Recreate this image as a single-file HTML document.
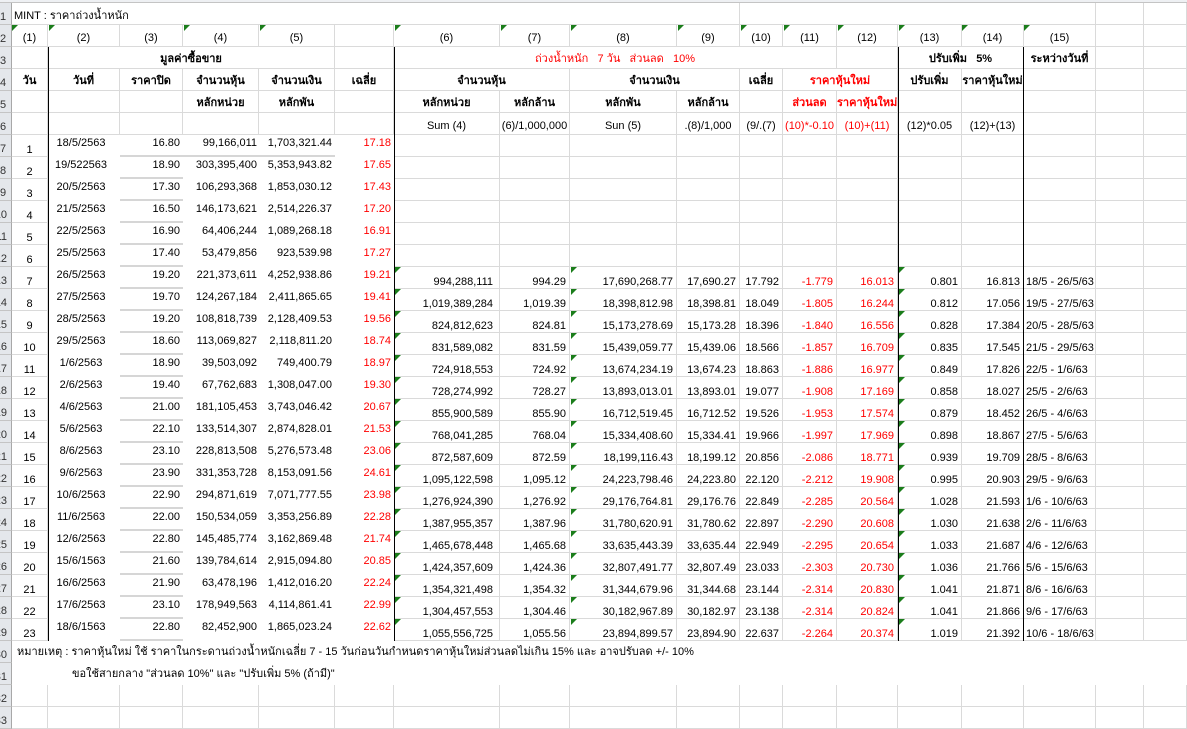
<!DOCTYPE html>
<html><head><meta charset="utf-8">
<style>
*{margin:0;padding:0;box-sizing:border-box}
body{width:1187px;height:714px;overflow:hidden;background:#fff;font-family:"Liberation Sans","DejaVu Sans",sans-serif;font-size:11px;color:#000;position:relative}
.row{display:grid;grid-template-columns:12px 36px 72px 63px 76px 76px 59px 106px 70px 107px 63px 43px 54px 61px 64px 62px 72px 48px 43px;height:22px}
.row>div{border-right:1px solid #dadada;border-bottom:1px solid #dadada;white-space:nowrap;overflow:hidden;text-align:center;line-height:14px}
.row>div:first-child{background:#e4e7eb;border-right:1px solid #a8a8a8;border-bottom:1px solid #c4c4c4;direction:rtl;text-align:left;padding:7px 4px 0 0;color:#333;font-size:11px;font-weight:normal}
.hd>div{padding-top:5px;font-weight:bold}
.red{color:#f00}
.r>div{text-align:right;padding:8px 3px 0 0}
.r>div:nth-child(2){text-align:center;padding-right:0}
.r>div:nth-child(3){text-align:center;padding:1px 6px 0 0;border:none}
.r>div:nth-child(4){padding-top:1px;border-right:none;border-bottom:2px solid #d6d6d6}
.r>div:nth-child(5),.r>div:nth-child(6),.r>div:nth-child(7){padding-top:1px;border:none}
.r>div:nth-child(5){padding-right:2px}
.r>div:nth-child(7),.r>div:nth-child(13),.r>div:nth-child(14){color:#f00}
.r>div:nth-child(8){padding-right:6px}
.r>div:nth-child(17){text-align:left;padding-left:2px}
.bl{position:absolute;width:1px;background:#000}
.t{position:absolute;width:0;height:0;border-top:6px solid #1b7d1b;border-right:6px solid transparent}
.blank>div{border:none!important}
.blank>div:first-child{border-right:1px solid #a8a8a8!important;border-bottom:1px solid #c4c4c4!important}
</style></head><body>
<div style="height:3px;background:#eef0f3;border-bottom:1px solid #c4c4c4"></div>

<div class="row" style="height:22px"><div>1</div><div style="grid-column:span 9;border-right:none;text-align:left;padding:6px 0 0 2px">MINT : ราคาถ่วงน้ำหนัก</div><div></div><div style="grid-column:span 5;border-right:none"></div><div></div><div></div><div></div></div>

<div class="row"><div>2</div><div style="padding-top:6px">(1)</div><div style="padding-top:6px">(2)</div><div style="padding-top:6px">(3)</div><div style="padding-top:6px">(4)</div><div style="padding-top:6px">(5)</div><div></div><div style="padding-top:6px">(6)</div><div style="padding-top:6px">(7)</div><div style="padding-top:6px">(8)</div><div style="padding-top:6px">(9)</div><div style="padding-top:6px">(10)</div><div style="padding-top:6px">(11)</div><div style="padding-top:6px">(12)</div><div style="padding-top:6px">(13)</div><div style="padding-top:6px">(14)</div><div style="padding-top:6px">(15)</div><div></div><div></div></div>

<div class="row hd"><div>3</div><div></div><div style="grid-column:span 4">มูลค่าซื้อขาย</div><div></div><div style="grid-column:span 6;color:#f00;font-weight:normal">ถ่วงน้ำหนัก&nbsp;&nbsp; 7 วัน&nbsp;&nbsp; ส่วนลด&nbsp;&nbsp; 10%</div><div></div><div style="grid-column:span 2">ปรับเพิ่ม&nbsp;&nbsp; 5%</div><div>ระหว่างวันที่</div><div></div><div></div></div>

<div class="row hd"><div>4</div><div>วัน</div><div>วันที่</div><div>ราคาปิด</div><div>จำนวนหุ้น</div><div>จำนวนเงิน</div><div>เฉลี่ย</div><div style="grid-column:span 2">จำนวนหุ้น</div><div style="grid-column:span 2">จำนวนเงิน</div><div>เฉลี่ย</div><div style="grid-column:span 2;color:#f00">ราคาหุ้นใหม่</div><div>ปรับเพิ่ม</div><div>ราคาหุ้นใหม่</div><div></div><div></div><div></div></div>

<div class="row hd"><div>5</div><div></div><div></div><div></div><div>หลักหน่วย</div><div>หลักพัน</div><div></div><div>หลักหน่วย</div><div>หลักล้าน</div><div>หลักพัน</div><div>หลักล้าน</div><div></div><div class="red">ส่วนลด</div><div class="red">ราคาหุ้นใหม่</div><div></div><div></div><div></div><div></div><div></div></div>

<div class="row"><div>6</div><div></div><div></div><div></div><div></div><div></div><div></div><div style="padding-top:6px">Sum (4)</div><div style="padding-top:6px">(6)/1,000,000</div><div style="padding-top:6px">Sun (5)</div><div style="padding-top:6px">.(8)/1,000</div><div style="padding-top:6px">(9/.(7)</div><div style="padding-top:6px" class="red">(10)*-0.10</div><div style="padding-top:6px" class="red">(10)+(11)</div><div style="padding-top:6px">(12)*0.05</div><div style="padding-top:6px">(12)+(13)</div><div></div><div></div><div></div></div>

<div class="row r"><div>7</div><div>1</div><div>18/5/2563</div><div>16.80</div><div style="border-bottom:2px solid #d6d6d6">99,166,011</div><div style="border-bottom:2px solid #d6d6d6">1,703,321.44</div><div>17.18</div><div></div><div></div><div></div><div></div><div></div><div></div><div></div><div></div><div></div><div></div><div></div><div></div></div>
<div class="row r"><div>8</div><div>2</div><div>19/522563</div><div>18.90</div><div>303,395,400</div><div>5,353,943.82</div><div>17.65</div><div></div><div></div><div></div><div></div><div></div><div></div><div></div><div></div><div></div><div></div><div></div><div></div></div>
<div class="row r"><div>9</div><div>3</div><div>20/5/2563</div><div>17.30</div><div>106,293,368</div><div>1,853,030.12</div><div>17.43</div><div></div><div></div><div></div><div></div><div></div><div></div><div></div><div></div><div></div><div></div><div></div><div></div></div>
<div class="row r"><div>10</div><div>4</div><div>21/5/2563</div><div>16.50</div><div>146,173,621</div><div>2,514,226.37</div><div>17.20</div><div></div><div></div><div></div><div></div><div></div><div></div><div></div><div></div><div></div><div></div><div></div><div></div></div>
<div class="row r"><div>11</div><div>5</div><div>22/5/2563</div><div>16.90</div><div>64,406,244</div><div>1,089,268.18</div><div>16.91</div><div></div><div></div><div></div><div></div><div></div><div></div><div></div><div></div><div></div><div></div><div></div><div></div></div>
<div class="row r"><div>12</div><div>6</div><div>25/5/2563</div><div>17.40</div><div>53,479,856</div><div>923,539.98</div><div>17.27</div><div></div><div></div><div></div><div></div><div></div><div></div><div></div><div></div><div></div><div></div><div></div><div></div></div>
<div class="row r"><div>13</div><div>7</div><div>26/5/2563</div><div>19.20</div><div>221,373,611</div><div>4,252,938.86</div><div>19.21</div><div>994,288,111</div><div>994.29</div><div>17,690,268.77</div><div>17,690.27</div><div>17.792</div><div>-1.779</div><div>16.013</div><div>0.801</div><div>16.813</div><div>18/5 - 26/5/63</div><div></div><div></div></div>
<div class="row r"><div>14</div><div>8</div><div>27/5/2563</div><div>19.70</div><div>124,267,184</div><div>2,411,865.65</div><div>19.41</div><div>1,019,389,284</div><div>1,019.39</div><div>18,398,812.98</div><div>18,398.81</div><div>18.049</div><div>-1.805</div><div>16.244</div><div>0.812</div><div>17.056</div><div>19/5 - 27/5/63</div><div></div><div></div></div>
<div class="row r"><div>15</div><div>9</div><div>28/5/2563</div><div>19.20</div><div>108,818,739</div><div>2,128,409.53</div><div>19.56</div><div>824,812,623</div><div>824.81</div><div>15,173,278.69</div><div>15,173.28</div><div>18.396</div><div>-1.840</div><div>16.556</div><div>0.828</div><div>17.384</div><div>20/5 - 28/5/63</div><div></div><div></div></div>
<div class="row r"><div>16</div><div>10</div><div>29/5/2563</div><div>18.60</div><div>113,069,827</div><div>2,118,811.20</div><div>18.74</div><div>831,589,082</div><div>831.59</div><div>15,439,059.77</div><div>15,439.06</div><div>18.566</div><div>-1.857</div><div>16.709</div><div>0.835</div><div>17.545</div><div>21/5 - 29/5/63</div><div></div><div></div></div>
<div class="row r"><div>17</div><div>11</div><div>1/6/2563</div><div>18.90</div><div>39,503,092</div><div>749,400.79</div><div>18.97</div><div>724,918,553</div><div>724.92</div><div>13,674,234.19</div><div>13,674.23</div><div>18.863</div><div>-1.886</div><div>16.977</div><div>0.849</div><div>17.826</div><div>22/5 - 1/6/63</div><div></div><div></div></div>
<div class="row r"><div>18</div><div>12</div><div>2/6/2563</div><div>19.40</div><div>67,762,683</div><div>1,308,047.00</div><div>19.30</div><div>728,274,992</div><div>728.27</div><div>13,893,013.01</div><div>13,893.01</div><div>19.077</div><div>-1.908</div><div>17.169</div><div>0.858</div><div>18.027</div><div>25/5 - 2/6/63</div><div></div><div></div></div>
<div class="row r"><div>19</div><div>13</div><div>4/6/2563</div><div>21.00</div><div>181,105,453</div><div>3,743,046.42</div><div>20.67</div><div>855,900,589</div><div>855.90</div><div>16,712,519.45</div><div>16,712.52</div><div>19.526</div><div>-1.953</div><div>17.574</div><div>0.879</div><div>18.452</div><div>26/5 - 4/6/63</div><div></div><div></div></div>
<div class="row r"><div>20</div><div>14</div><div>5/6/2563</div><div>22.10</div><div>133,514,307</div><div>2,874,828.01</div><div>21.53</div><div>768,041,285</div><div>768.04</div><div>15,334,408.60</div><div>15,334.41</div><div>19.966</div><div>-1.997</div><div>17.969</div><div>0.898</div><div>18.867</div><div>27/5 - 5/6/63</div><div></div><div></div></div>
<div class="row r"><div>21</div><div>15</div><div>8/6/2563</div><div>23.10</div><div>228,813,508</div><div>5,276,573.48</div><div>23.06</div><div>872,587,609</div><div>872.59</div><div>18,199,116.43</div><div>18,199.12</div><div>20.856</div><div>-2.086</div><div>18.771</div><div>0.939</div><div>19.709</div><div>28/5 - 8/6/63</div><div></div><div></div></div>
<div class="row r"><div>22</div><div>16</div><div>9/6/2563</div><div>23.90</div><div>331,353,728</div><div>8,153,091.56</div><div>24.61</div><div>1,095,122,598</div><div>1,095.12</div><div>24,223,798.46</div><div>24,223.80</div><div>22.120</div><div>-2.212</div><div>19.908</div><div>0.995</div><div>20.903</div><div>29/5 - 9/6/63</div><div></div><div></div></div>
<div class="row r"><div>23</div><div>17</div><div>10/6/2563</div><div>22.90</div><div>294,871,619</div><div>7,071,777.55</div><div>23.98</div><div>1,276,924,390</div><div>1,276.92</div><div>29,176,764.81</div><div>29,176.76</div><div>22.849</div><div>-2.285</div><div>20.564</div><div>1.028</div><div>21.593</div><div>1/6 - 10/6/63</div><div></div><div></div></div>
<div class="row r"><div>24</div><div>18</div><div>11/6/2563</div><div>22.00</div><div>150,534,059</div><div>3,353,256.89</div><div>22.28</div><div>1,387,955,357</div><div>1,387.96</div><div>31,780,620.91</div><div>31,780.62</div><div>22.897</div><div>-2.290</div><div>20.608</div><div>1.030</div><div>21.638</div><div>2/6 - 11/6/63</div><div></div><div></div></div>
<div class="row r"><div>25</div><div>19</div><div>12/6/2563</div><div>22.80</div><div>145,485,774</div><div>3,162,869.48</div><div>21.74</div><div>1,465,678,448</div><div>1,465.68</div><div>33,635,443.39</div><div>33,635.44</div><div>22.949</div><div>-2.295</div><div>20.654</div><div>1.033</div><div>21.687</div><div>4/6 - 12/6/63</div><div></div><div></div></div>
<div class="row r"><div>26</div><div>20</div><div>15/6/1563</div><div>21.60</div><div>139,784,614</div><div>2,915,094.80</div><div>20.85</div><div>1,424,357,609</div><div>1,424.36</div><div>32,807,491.77</div><div>32,807.49</div><div>23.033</div><div>-2.303</div><div>20.730</div><div>1.036</div><div>21.766</div><div>5/6 - 15/6/63</div><div></div><div></div></div>
<div class="row r"><div>27</div><div>21</div><div>16/6/2563</div><div>21.90</div><div>63,478,196</div><div>1,412,016.20</div><div>22.24</div><div>1,354,321,498</div><div>1,354.32</div><div>31,344,679.96</div><div>31,344.68</div><div>23.144</div><div>-2.314</div><div>20.830</div><div>1.041</div><div>21.871</div><div>8/6 - 16/6/63</div><div></div><div></div></div>
<div class="row r"><div>28</div><div>22</div><div>17/6/2563</div><div>23.10</div><div>178,949,563</div><div>4,114,861.41</div><div>22.99</div><div>1,304,457,553</div><div>1,304.46</div><div>30,182,967.89</div><div>30,182.97</div><div>23.138</div><div>-2.314</div><div>20.824</div><div>1.041</div><div>21.866</div><div>9/6 - 17/6/63</div><div></div><div></div></div>
<div class="row r"><div>29</div><div>23</div><div>18/6/1563</div><div>22.80</div><div>82,452,900</div><div>1,865,023.24</div><div>22.62</div><div>1,055,556,725</div><div>1,055.56</div><div>23,894,899.57</div><div>23,894.90</div><div>22.637</div><div>-2.264</div><div>20.374</div><div>1.019</div><div>21.392</div><div>10/6 - 18/6/63</div><div></div><div></div></div>

<div class="row blank"><div>30</div><div style="grid-column:span 16;text-align:left;padding:4px 0 0 5px">หมายเหตุ : ราคาหุ้นใหม่ ใช้ ราคาในกระดานถ่วงน้ำหนักเฉลี่ย 7 - 15 วันก่อนวันกำหนดราคาหุ้นใหม่ส่วนลดไม่เกิน 15% และ อาจปรับลด +/- 10%</div><div></div><div></div></div>
<div class="row blank"><div>31</div><div style="grid-column:span 16;text-align:left;padding:4px 0 0 60px">ขอใช้สายกลาง "ส่วนลด 10%" และ "ปรับเพิ่ม 5% (ถ้ามี)"</div><div></div><div></div></div>
<div class="row"><div>32</div><div></div><div></div><div></div><div></div><div></div><div></div><div></div><div></div><div></div><div></div><div></div><div></div><div></div><div></div><div></div><div></div><div></div><div></div></div>
<div class="row"><div>33</div><div></div><div></div><div></div><div></div><div></div><div></div><div></div><div></div><div></div><div></div><div></div><div></div><div></div><div></div><div></div><div></div><div></div><div></div></div>

<div class="bl" style="left:48px;top:47px;height:594px"></div>
<div class="bl" style="left:394px;top:47px;height:594px"></div>
<div class="bl" style="left:898px;top:47px;height:594px"></div>
<div class="bl" style="left:1023px;top:47px;height:594px"></div>

<div class="t" style="left:12px;top:25px"></div><div class="t" style="left:49px;top:25px"></div><div class="t" style="left:184px;top:25px"></div><div class="t" style="left:260px;top:25px"></div><div class="t" style="left:395px;top:25px"></div><div class="t" style="left:501px;top:25px"></div><div class="t" style="left:571px;top:25px"></div><div class="t" style="left:678px;top:25px"></div><div class="t" style="left:741px;top:25px"></div><div class="t" style="left:784px;top:25px"></div><div class="t" style="left:838px;top:25px"></div><div class="t" style="left:899px;top:25px"></div><div class="t" style="left:962px;top:25px"></div><div class="t" style="left:1024px;top:25px"></div>

<div class="t" style="left:395px;top:267px"></div><div class="t" style="left:571px;top:267px"></div><div class="t" style="left:899px;top:267px"></div>
<div class="t" style="left:395px;top:289px"></div><div class="t" style="left:571px;top:289px"></div><div class="t" style="left:899px;top:289px"></div>
<div class="t" style="left:395px;top:311px"></div><div class="t" style="left:571px;top:311px"></div><div class="t" style="left:899px;top:311px"></div>
<div class="t" style="left:395px;top:333px"></div><div class="t" style="left:571px;top:333px"></div><div class="t" style="left:899px;top:333px"></div>
<div class="t" style="left:395px;top:355px"></div><div class="t" style="left:571px;top:355px"></div><div class="t" style="left:899px;top:355px"></div>
<div class="t" style="left:395px;top:377px"></div><div class="t" style="left:571px;top:377px"></div><div class="t" style="left:899px;top:377px"></div>
<div class="t" style="left:395px;top:399px"></div><div class="t" style="left:571px;top:399px"></div><div class="t" style="left:899px;top:399px"></div>
<div class="t" style="left:395px;top:421px"></div><div class="t" style="left:571px;top:421px"></div><div class="t" style="left:899px;top:421px"></div>
<div class="t" style="left:395px;top:443px"></div><div class="t" style="left:571px;top:443px"></div><div class="t" style="left:899px;top:443px"></div>
<div class="t" style="left:395px;top:465px"></div><div class="t" style="left:571px;top:465px"></div><div class="t" style="left:899px;top:465px"></div>
<div class="t" style="left:395px;top:487px"></div><div class="t" style="left:571px;top:487px"></div><div class="t" style="left:899px;top:487px"></div>
<div class="t" style="left:395px;top:509px"></div><div class="t" style="left:571px;top:509px"></div><div class="t" style="left:899px;top:509px"></div>
<div class="t" style="left:395px;top:531px"></div><div class="t" style="left:571px;top:531px"></div><div class="t" style="left:899px;top:531px"></div>
<div class="t" style="left:395px;top:553px"></div><div class="t" style="left:571px;top:553px"></div><div class="t" style="left:899px;top:553px"></div>
<div class="t" style="left:395px;top:575px"></div><div class="t" style="left:571px;top:575px"></div><div class="t" style="left:899px;top:575px"></div>
<div class="t" style="left:395px;top:597px"></div><div class="t" style="left:571px;top:597px"></div><div class="t" style="left:899px;top:597px"></div>
<div class="t" style="left:395px;top:619px"></div><div class="t" style="left:571px;top:619px"></div><div class="t" style="left:899px;top:619px"></div>
</body></html>
